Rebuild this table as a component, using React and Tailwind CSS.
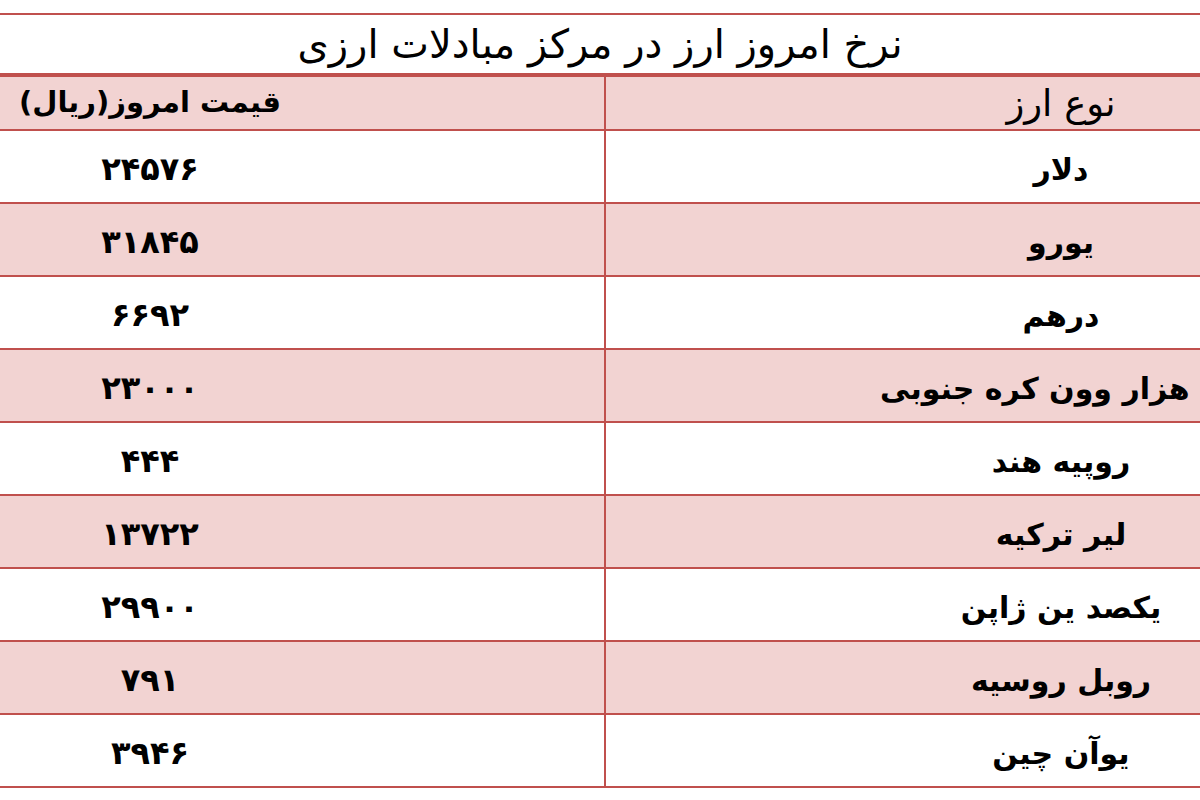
import React from "react";

const RED = "border-[#c0504d]";

const rows = [
    {name: "دلار", price: "۲۴۵۷۶"},
    {name: "یورو", price: "۳۱۸۴۵"},
    {name: "درهم", price: "۶۶۹۲"},
    {name: "یک هزار وون کره جنوبی", price: "۲۳۰۰۰"},
    {name: "روپیه هند", price: "۴۴۴"},
    {name: "لیر ترکیه", price: "۱۳۷۲۲"},
    {name: "یکصد ین ژاپن", price: "۲۹۹۰۰"},
    {name: "روبل روسیه", price: "۷۹۱"},
    {name: "یوآن چین", price: "۳۹۴۶"},
];

const Row = ({name, price, pink}) => (
    <div className={`flex h-[73px] border-b-[2px] ${RED} ${pink ? 'bg-[#f2d3d2]' : 'bg-white'}`}>
        <div className={`w-[606px] shrink-0 border-r-[2px] ${RED}`}>
            <div dir="rtl" className="w-[300px] h-full flex items-start justify-center pt-[14px] text-[32px] font-bold text-black">
                {price}
            </div>
        </div>
        <div className="flex-1 overflow-hidden">
            <div dir="rtl"
                 className="w-[910px] h-full flex items-center justify-center pt-[6px] text-[30px] font-bold text-black whitespace-nowrap">
                {name}
            </div>
        </div>
    </div>
);

export default function App() {
    return (
        <div className="w-[1200px] h-[800px] bg-white overflow-hidden pt-[13px]"
             style={{fontFamily: '"DejaVu Sans", "Noto Sans", sans-serif'}}>
            <div className={`border-t-[2px] ${RED}`}>
                <div dir="rtl" className="h-[58px] flex items-center justify-center text-[40px] text-black">
                    نرخ امروز ارز در مرکز مبادلات ارزی
                </div>
            </div>
            <div className={`border-t-[4px] ${RED}`}>
                <div className={`flex h-[54px] bg-[#f2d3d2] border-b-[2px] ${RED}`}>
                    <div className={`w-[606px] shrink-0 border-r-[2px] ${RED}`}>
                        <div dir="rtl" className="w-[300px] h-full flex items-center justify-center text-[29px] font-bold text-black">
                            قیمت امروز(ریال)
                        </div>
                    </div>
                    <div className="flex-1 overflow-hidden">
                        <div dir="rtl" className="w-[910px] h-full flex items-center justify-center pt-[2px] text-[37px] text-black">
                            نوع ارز
                        </div>
                    </div>
                </div>
                {rows.map((row, index) => (
                    <Row key={index} name={row.name} price={row.price} pink={index % 2 === 1}/>
                ))}
            </div>
        </div>
    );
}
